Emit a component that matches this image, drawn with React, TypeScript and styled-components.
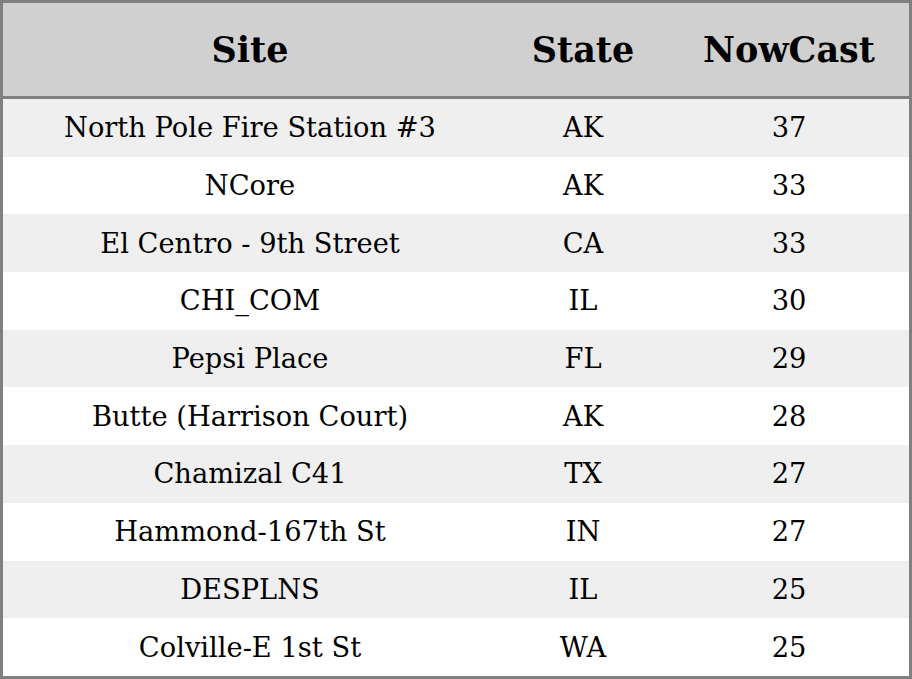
import React from 'react';
import styled, { createGlobalStyle } from "styled-components";

const GlobalStyle = createGlobalStyle`
    html, body {
        margin: 0;
        padding: 0;
        background: #ffffff;
    }
    body {
        font-family: "DejaVu Serif", serif;
    }
`

const rows = [
    { site: "North Pole Fire Station #3", state: "AK", nowcast: 37 },
    { site: "NCore", state: "AK", nowcast: 33 },
    { site: "El Centro - 9th Street", state: "CA", nowcast: 33 },
    { site: "CHI_COM", state: "IL", nowcast: 30 },
    { site: "Pepsi Place", state: "FL", nowcast: 29 },
    { site: "Butte (Harrison Court)", state: "AK", nowcast: 28 },
    { site: "Chamizal C41", state: "TX", nowcast: 27 },
    { site: "Hammond-167th St", state: "IN", nowcast: 27 },
    { site: "DESPLNS", state: "IL", nowcast: 25 },
    { site: "Colville-E 1st St", state: "WA", nowcast: 25 },
];

export default function App() {
    return (
        <>
            <GlobalStyle />
            <Table>
                <colgroup>
                    <col style={{ width: 494 }} />
                    <col style={{ width: 172 }} />
                    <col style={{ width: 240 }} />
                </colgroup>
                <thead>
                    <tr>
                        <Th>Site</Th>
                        <Th>State</Th>
                        <Th>NowCast</Th>
                    </tr>
                </thead>
                <tbody>
                    {rows.map((r, i) => (
                        <Row key={i} $odd={i % 2 === 0}>
                            <Td>{r.site}</Td>
                            <Td>{r.state}</Td>
                            <Td>{r.nowcast}</Td>
                        </Row>
                    ))}
                </tbody>
            </Table>
        </>
    );
}

const Table = styled.table`
    width: 912px;
    height: 679px;
    box-sizing: border-box;
    border: 3px solid #808080;
    border-collapse: separate;
    border-spacing: 0;
    table-layout: fixed;
    color: #000;
`

const Th = styled.th`
    height: 93px;
    box-sizing: content-box;
    background: #d0d0d0;
    border-bottom: 3px solid #808080;
    font-family: "DejaVu Serif", serif;
    font-weight: bold;
    font-size: 35px;
    text-align: center;
    vertical-align: middle;
    padding: 0;
`

const Row = styled.tr<{ $odd: boolean }>`
    height: 57.7px;
    background: ${p => p.$odd ? "#efefef" : "#ffffff"};
`

const Td = styled.td`
    font-family: "DejaVu Serif", serif;
    font-size: 27.3px;
    text-align: center;
    vertical-align: middle;
    padding: 0;
`
